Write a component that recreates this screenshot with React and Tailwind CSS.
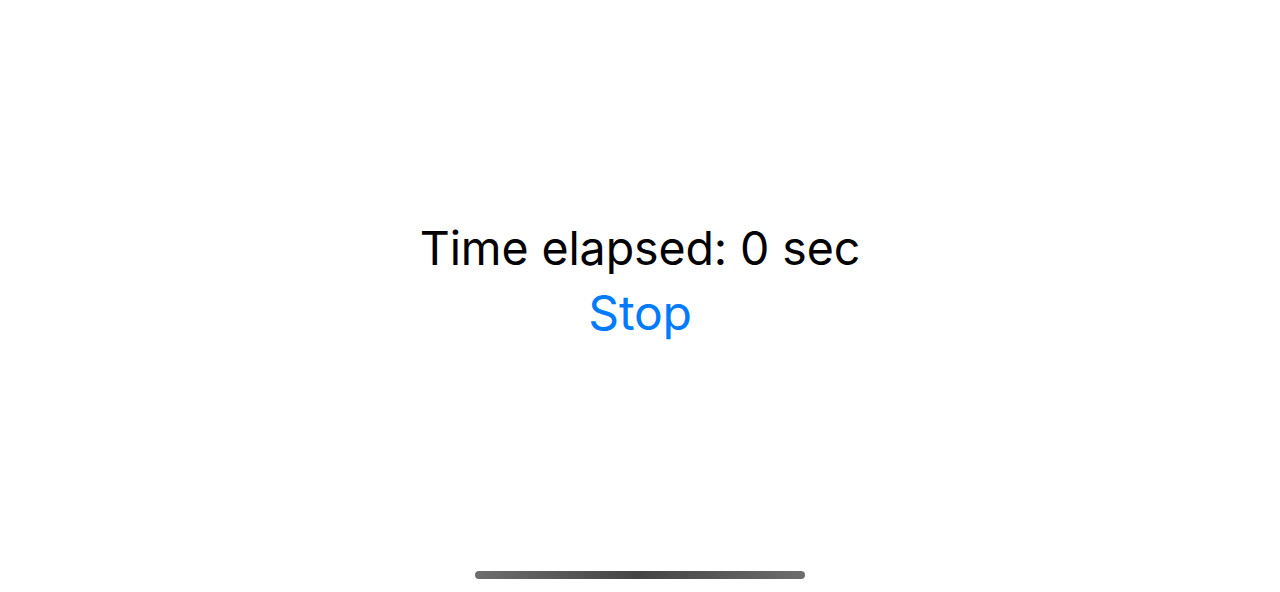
export default function App() {
  return (
    <div className="w-[1280px] h-[592px] bg-white flex flex-col items-center" style={{ fontFamily: "Inter, 'Liberation Sans', sans-serif" }}>
      <div className="flex-1 flex flex-col items-center justify-center pb-[10px]">
        <div className="text-[46.5px] leading-[56px] text-black tracking-[-0.1px]">Time elapsed: 0 sec</div>
        <button className="text-[48px] leading-[56px] text-[#007aff] mt-[9px] tracking-[-0.2px]">Stop</button>
      </div>
      <div className="w-[330px] h-[8px] rounded-full bg-gradient-to-r from-[#6e6e6e] via-[#444444] to-[#6e6e6e] mb-[13px]" />
    </div>
  );
}
